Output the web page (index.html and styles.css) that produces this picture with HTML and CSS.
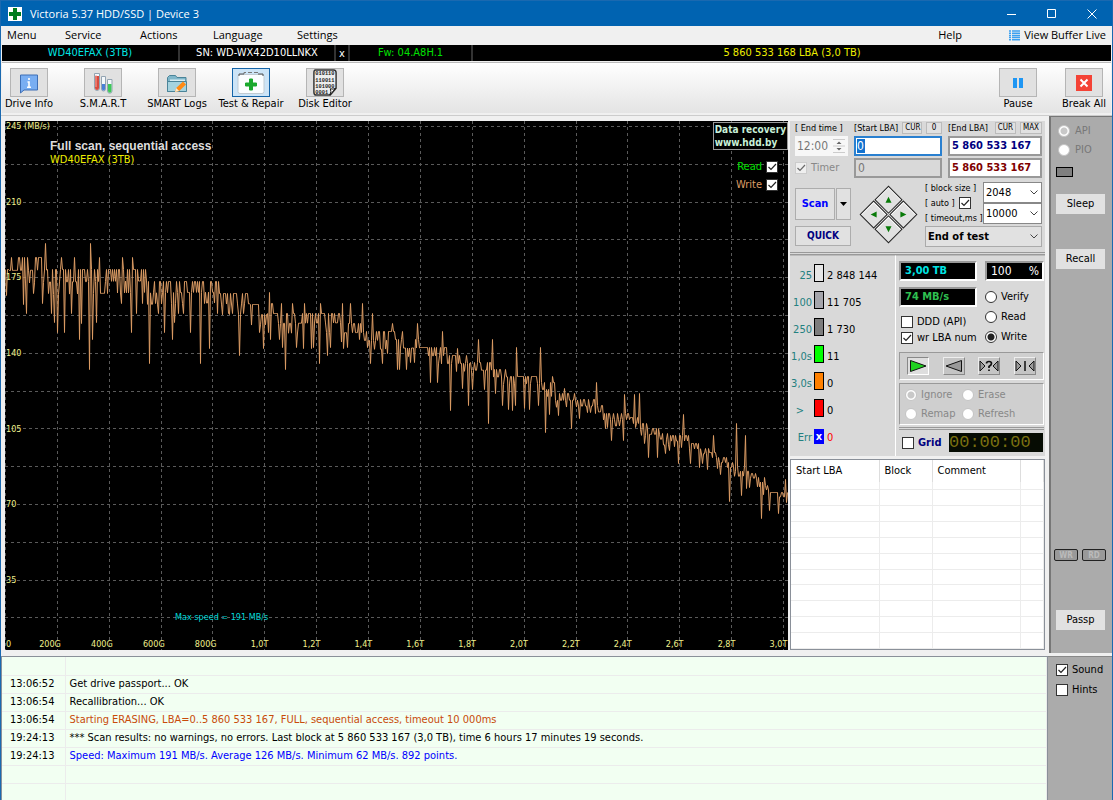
FILE: index.html
```
<!DOCTYPE html>
<html lang="en">
<head>
  <meta charset="utf-8">
  <meta name="viewport" content="width=device-width, initial-scale=1.0">
  <title>Victoria 5.37 HDD/SSD | Device 3</title>
  <link rel="stylesheet" href="styles.css">
</head>
<body>
  <header class="titlebar">
    <svg class="app-icon" viewBox="0 0 14 14"><rect width="14" height="14" fill="#fff"/><path d="M5 1h4v4h4v4H9v4H5V9H1V5h4z" fill="#007d1e"/></svg>
    <h1>Victoria 5.37 HDD/SSD | Device 3</h1>
    <div class="window-buttons">
      <button aria-label="Minimize"><svg viewBox="0 0 10 10"><path d="M0 5.5h9"/></svg></button>
      <button aria-label="Maximize"><svg viewBox="0 0 10 10"><path d="M.5.5h8v8h-8z"/></svg></button>
      <button aria-label="Close"><svg viewBox="0 0 10 10"><path d="M.5.5l9 9M9.5.5l-9 9"/></svg></button>
    </div>
  </header>

  <nav class="menu">
    <a href="#">Menu</a>
    <a href="#">Service</a>
    <a href="#">Actions</a>
    <a href="#">Language</a>
    <a href="#">Settings</a>
    <a href="#" class="help">Help</a>
    <a href="#" class="buffer">
      <svg viewBox="0 0 11 11"><path d="M0 1h2M3 1h8M0 3.2h2M3 3.2h8M0 5.4h2M3 5.4h8M0 7.6h2M3 7.6h8M0 9.8h2M3 9.8h8" stroke="#3ba0f0" stroke-width="1.5"/></svg>
      View Buffer Live
    </a>
  </nav>

  <div class="drive-bar">
    <span class="model">WD40EFAX (3TB)</span>
    <span class="serial">SN: WD-WX42D10LLNKX</span>
    <button class="close-drive">x</button>
    <span class="firmware">Fw: 04.A8H.1</span>
    <span class="capacity">5 860 533 168 LBA (3,0 TB)</span>
  </div>

  <div class="toolbar">
    <button class="tool">
      <span class="tool-box"><svg viewBox="0 0 24 24"><path d="M3.500 4h17v15H7l-3.500 3z" fill="#79aef2" stroke="#3f6fb5"/><path d="M12 7v2M10.500 11H12v5M10 16.300h4" stroke="#fff" stroke-width="1.600" fill="none"/></svg></span>
      Drive Info
    </button>
    <button class="tool">
      <span class="tool-box"><svg viewBox="0 0 24 24"><g fill="#f4f8fb" stroke="#93a4b2"><path d="M3.500 2.500h5V17a2.500 2.500 0 0 1-5 0z"/><path d="M10.500 5.500h4V18a2 2 0 0 1-4 0z"/><path d="M16.500 8.500h4.500V20a2.200 2.200 0 0 1-4.500 0z"/></g><path d="M4 5h4v12a2 2 0 0 1-4 0z" fill="#d94a3e"/><path d="M11 13h3v5a1.500 1.500 0 0 1-3 0z" fill="#4a80d8"/><path d="M17 13h3.500v7a1.700 1.700 0 0 1-3.500 0z" fill="#3fc85a"/><path d="M5 4v12" stroke="#f5a79d"/></svg></span>
      S.M.A.R.T
    </button>
    <button class="tool">
      <span class="tool-box"><svg viewBox="0 0 24 24"><path d="M2.500 20.500v-14l2-2h6l1.500 2h9v14z" fill="#7fb6c9" stroke="#4b8499"/><path d="M5 8.500h15v3H5z" fill="#d7edf3"/><path d="M2.500 20.500V10.500h19v10z" fill="#a5d3df" stroke="#4b8499"/><path d="M10 21l1.200-4L18 10.500l3 3-6.800 6.500z" fill="#ff8a14"/><path d="M10 21l1.200-4 3 3z" fill="#ffe9c9"/></svg></span>
      SMART Logs
    </button>
    <button class="tool active">
      <span class="tool-box"><svg class="wide" viewBox="0 0 28 24"><path d="M7 3.500V1.500h14v2" fill="none" stroke="#777" stroke-dasharray="4 2"/><rect x="1" y="3.500" width="26" height="19" rx="2" fill="#fafdff" stroke="#c0cbd3"/><path d="M2 5V3h5M21 3h5v2" fill="none" stroke="#555"/><path d="M12.500 8h3v4h4v3h-4v4h-3v-4h-4v-3h4z" fill="#19a82e" stroke="#19a82e"/></svg></span>
      Test &amp; Repair
    </button>
    <button class="tool">
      <span class="tool-box"><svg class="disk" viewBox="0 0 26 28"><path d="M3 1h19q2.500 0 2.500 3v16l-6 7H4Q1.500 27 1.500 24V4Q1.500 1 3 1z" fill="#ededed" stroke="#333" stroke-width="1.500"/><g font-family="Liberation Mono, monospace" font-size="5.500" font-weight="bold" fill="#222"><text x="3" y="6.500">010110</text><text x="3" y="13">110011</text><text x="3" y="19.500">101000</text><text x="3" y="26">0001</text></g><path d="M24 20l-6 7q2-4 .5-6.500 3 1 5.500-.5z" fill="#fff" stroke="#111"/></svg></span>
      Disk Editor
    </button>
    <div class="toolbar-right">
      <button class="tool">
        <span class="tool-box"><svg class="small" viewBox="0 0 10 10"><path d="M0 0h4v10H0zM6 0h4v10H6z" fill="#1f96f3"/></svg></span>
        Pause
      </button>
      <button class="tool">
        <span class="tool-box"><svg class="stop" viewBox="0 0 16 16"><rect width="16" height="16" fill="#f44336"/><path d="M4.500 4.500l7 7M11.500 4.500l-7 7" stroke="#fff" stroke-width="2"/></svg></span>
        Break All
      </button>
    </div>
  </div>

  <main class="main">
    <section class="chart">
      <svg id="graph" viewBox="0 0 783 529" preserveAspectRatio="none">
        <g id="grid"></g>
        <polyline id="speed"></polyline>
      </svg>
      <ul class="y-axis">
        <li>245 (MB/s)</li><li>210</li><li>175</li><li>140</li><li>105</li><li>70</li><li>35</li>
      </ul>
      <ul class="x-axis">
        <li>200G</li><li>400G</li><li>600G</li><li>800G</li><li>1,0T</li><li>1,2T</li><li>1,4T</li><li>1,6T</li><li>1,8T</li><li>2,0T</li><li>2,2T</li><li>2,4T</li><li>2,6T</li><li>2,8T</li><li>3,0T</li>
      </ul>
      <span class="x-zero">0</span>
      <div class="chart-title">
        <strong>Full scan, sequential access</strong>
        <span>WD40EFAX (3TB)</span>
      </div>
      <div class="chart-side">
        <a href="#" class="recovery">Data recovery<br>www.hdd.by</a>
        <label class="read">Read <input type="checkbox" checked></label>
        <label class="write">Write <input type="checkbox" checked></label>
      </div>
      <span class="max-speed">Max speed = 191 MB/s</span>
    </section>

    <section class="panel">
      <div class="range">
        <div class="range-grid">
          <label class="caption" for="endTime">[ End time ]</label>
          <div class="caption-row">
            <label class="caption" for="startLba">[Start LBA]</label>
            <button class="mini">CUR</button>
            <button class="mini">0</button>
          </div>
          <div class="caption-row">
            <label class="caption" for="endLba">[End LBA]</label>
            <button class="mini">CUR</button>
            <button class="mini">MAX</button>
          </div>
          <div class="time">
            <input id="endTime" type="text" value="12:00" disabled>
            <svg viewBox="0 0 12 14"><path d="M0 .5h12M0 7h12M0 13.500h12" stroke="#ccc"/><path d="M3.500 5L6 2.500 8.500 5M3.500 9L6 11.500 8.500 9" fill="#666"/></svg>
          </div>
          <div class="field"><input id="startLba" type="text" value="0"></div>
          <input id="endLba" class="lba" type="text" value="5 860 533 167">
          <label class="timer"><input type="checkbox" checked disabled> Timer</label>
          <input class="lba off" type="text" value="0" aria-label="Current start" disabled>
          <input class="lba red" type="text" value="5 860 533 167" aria-label="Current end">
        </div>
        <div class="range-bottom">
          <div class="scan-buttons">
            <button class="scan">Scan</button>
            <button class="scan-more" aria-label="Scan options"><svg viewBox="0 0 7 4"><path d="M0 0h7L3.500 4z"/></svg></button>
            <button class="quick">QUICK</button>
          </div>
          <div class="diamond">
            <button aria-label="Up"><svg class="up" viewBox="0 0 8 8"><path d="M4 1l3 6H1z"/></svg></button>
            <button aria-label="Right"><svg class="right" viewBox="0 0 8 8"><path d="M4 1l3 6H1z"/></svg></button>
            <button aria-label="Left"><svg class="left" viewBox="0 0 8 8"><path d="M4 1l3 6H1z"/></svg></button>
            <button aria-label="Down"><svg class="down" viewBox="0 0 8 8"><path d="M4 1l3 6H1z"/></svg></button>
          </div>
          <div class="options">
            <div class="option-labels">
              <label class="caption" for="blockSize">[ block size ]</label>
              <label class="caption auto">[ auto ] <input type="checkbox" checked></label>
              <label class="caption" for="timeout">[ timeout,ms ]</label>
            </div>
            <div class="option-fields">
              <select id="blockSize"><option>2048</option></select>
              <select id="timeout"><option>10000</option></select>
            </div>
            <select class="end-action" aria-label="When finished"><option>End of test</option></select>
          </div>
        </div>
      </div>

      <div class="stats">
        <dl class="blocks">
          <dt>25</dt><dd class="b25"><i></i>2 848 144</dd>
          <dt>100</dt><dd class="b100"><i></i>11 705</dd>
          <dt>250</dt><dd class="b250"><i></i>1 730</dd>
          <dt>1,0s</dt><dd class="b1s"><i></i>11</dd>
          <dt>3,0s</dt><dd class="b3s"><i></i>0</dd>
          <dt class="more">&gt;</dt><dd class="bmore"><i></i>0</dd>
          <dt>Err</dt><dd class="berr"><i>x</i>0</dd>
        </dl>
        <div class="modes">
          <div class="mode-grid">
            <div class="mode-col">
              <output class="lcd cyan">3,00 TB</output>
              <output class="lcd green">74 MB/s</output>
              <label><input type="checkbox"> DDD (API)</label>
              <label><input type="checkbox" checked> wr LBA num</label>
            </div>
            <div class="mode-col right-col">
              <output class="lcd percent"><span>100</span><span>%</span></output>
              <label><input type="radio" name="mode"> Verify</label>
              <label><input type="radio" name="mode"> Read</label>
              <label><input type="radio" name="mode" checked> Write</label>
            </div>
          </div>
          <div class="direction">
            <button class="pressed" aria-label="Forward"><svg viewBox="0 0 20 14"><path d="M2.500 1.500v11L18 7z" fill="#1fd11f" stroke="#111"/></svg></button>
            <button aria-label="Backward"><svg viewBox="0 0 20 14"><path d="M17.500 1.500v11L2 7z" fill="#9a9a9a" stroke="#111"/></svg></button>
            <button aria-label="Random"><svg viewBox="0 0 20 14"><path d="M1 2v10l5-5zM19 2v10l-5-5z" fill="#9a9a9a" stroke="#111"/><path d="M7.500 4.500q0-2 2.500-2t2.500 2q0 1.500-2.500 3V9M10 10.500v1.500" fill="none" stroke="#111" stroke-width="1.700"/></svg></button>
            <button aria-label="Butterfly"><svg viewBox="0 0 20 14"><path d="M1 2v10l5-5zM19 2v10l-5-5z" fill="#9a9a9a" stroke="#111"/><path d="M10 2v10" stroke="#111" stroke-width="1.500"/></svg></button>
          </div>
          <fieldset class="repair" disabled>
            <label><input type="radio" name="repair" checked> Ignore</label>
            <label><input type="radio" name="repair"> Erase</label>
            <label><input type="radio" name="repair"> Remap</label>
            <label><input type="radio" name="repair"> Refresh</label>
          </fieldset>
          <div class="grid-row">
            <label><input type="checkbox"> Grid</label>
            <output class="clock">00:00:00</output>
          </div>
        </div>
      </div>

      <div class="defects">
        <table>
          <thead>
            <tr><th class="c-start">Start LBA</th><th class="c-block">Block</th><th class="c-comment">Comment</th><th></th></tr>
          </thead>
          <tbody>
            <tr><td></td><td></td><td></td><td></td></tr>
            <tr><td></td><td></td><td></td><td></td></tr>
            <tr><td></td><td></td><td></td><td></td></tr>
            <tr><td></td><td></td><td></td><td></td></tr>
            <tr><td></td><td></td><td></td><td></td></tr>
            <tr><td></td><td></td><td></td><td></td></tr>
            <tr><td></td><td></td><td></td><td></td></tr>
            <tr><td></td><td></td><td></td><td></td></tr>
            <tr><td></td><td></td><td></td><td></td></tr>
            <tr><td></td><td></td><td></td><td></td></tr>
            <tr><td></td><td></td><td></td><td></td></tr>
          </tbody>
        </table>
      </div>
    </section>

    <aside class="side">
      <label class="dim"><input type="radio" name="access" checked disabled> API</label>
      <label class="dim"><input type="radio" name="access" disabled> PIO</label>
      <span class="led"></span>
      <button class="side-btn">Sleep</button>
      <button class="side-btn recall">Recall</button>
      <div class="indicators"><span>WR</span><span>RD</span></div>
      <button class="side-btn">Passp</button>
    </aside>
  </main>

  <footer class="bottom">
    <div class="log">
      <table>
        <tr><td></td><td></td></tr>
        <tr><td>13:06:52</td><td>Get drive passport... OK</td></tr>
        <tr><td>13:06:54</td><td>Recallibration... OK</td></tr>
        <tr><td>13:06:54</td><td class="warn">Starting ERASING, LBA=0..5 860 533 167, FULL, sequential access, timeout 10 000ms</td></tr>
        <tr><td>19:24:13</td><td>*** Scan results: no warnings, no errors. Last block at 5 860 533 167 (3,0 TB), time 6 hours 17 minutes 19 seconds.</td></tr>
        <tr><td>19:24:13</td><td class="info">Speed: Maximum 191 MB/s. Average 126 MB/s. Minimum 62 MB/s. 892 points.</td></tr>
        <tr><td></td><td></td></tr>
        <tr><td></td><td></td></tr>
      </table>
    </div>
    <div class="switches">
      <label><input type="checkbox" checked> Sound</label>
      <label><input type="checkbox"> Hints</label>
    </div>
  </footer>

  <script src="graph.js"></script>
</body>
</html>
```
FILE: styles.css
```
* {
  box-sizing: border-box;
}
body {
  margin: 0;
  min-height: 100vh;
  display: flex;
  flex-direction: column;
  border: 1px solid #1a69b0;
  background-color: #f0f0f0;
  color: #000;
  font-family: "DejaVu Sans Condensed", "DejaVu Sans", sans-serif;
  font-size: 11px;
  line-height: 14px;
}
button, input, select {
  font: inherit;
  color: inherit;
  margin: 0;
  padding: 0;
}
button {
  border: 1px solid #adadad;
  background-color: #e1e1e1;
}
a {
  color: inherit;
  text-decoration: none;
}
label {
  display: flex;
  align-items: center;
  gap: 4px;
  white-space: nowrap;
}
ul, dl, dd, fieldset {
  margin: 0;
  padding: 0;
  border: 0;
  list-style: none;
}
svg {
  display: block;
}
table {
  border-collapse: collapse;
}

input[type="checkbox"], input[type="radio"] {
  appearance: none;
  flex: none;
  width: 12px;
  height: 12px;
  border: 1px solid #333;
  background: #fff center / 10px 10px no-repeat;
}
input[type="radio"] {
  border-radius: 50%;
}
input[type="checkbox"]:checked {
  background-image: url("data:image/svg+xml,%3Csvg xmlns='http://www.w3.org/2000/svg' viewBox='0 0 10 10'%3E%3Cpath d='M1.500 5l2.500 2.500 5-5.500' fill='none' stroke='%23222' stroke-width='1.200'/%3E%3C/svg%3E");
}
input[type="radio"]:checked {
  background-image: radial-gradient(circle, #222 3px, transparent 4px);
}
input[type="checkbox"]:disabled, input[type="radio"]:disabled {
  border-color: #c4c4c4;
}
input[type="checkbox"]:disabled {
  opacity: 0.6;
}
input[type="radio"]:disabled:checked {
  background-image: radial-gradient(circle, #c8c8c8 3px, transparent 4px);
}

/* title and menu */
.titlebar {
  display: flex;
  align-items: center;
  height: 25px;
  padding-left: 7px;
  background-color: #0063b1;
  color: #fff;
}
.app-icon {
  width: 14px;
  height: 14px;
}
.titlebar h1 {
  margin: 0 auto 0 8px;
  font: 11px "Open Sans", sans-serif;
}
.window-buttons {
  display: flex;
}
.window-buttons button {
  width: 40px;
  height: 25px;
  display: grid;
  place-items: center;
  border: 0;
  background: none;
}
.window-buttons svg {
  width: 10px;
  height: 10px;
  fill: none;
  stroke: #fff;
}
.menu {
  display: grid;
  grid-template-columns: 58px 75px 73px 84px 1fr 71px auto;
  align-items: center;
  height: 18px;
  padding: 0 6px;
  font-family: "Open Sans", sans-serif;
}
.buffer {
  display: flex;
  align-items: center;
  gap: 4px;
}
.buffer svg {
  width: 11px;
  height: 11px;
}

.drive-bar {
  display: grid;
  grid-template-columns: 178px 156px 14px 123px 1fr;
  height: 16px;
  margin: 1px 1px 0;
  background-color: #000;
  text-align: center;
  line-height: 15px;
}
.drive-bar > * {
  border-right: 2px solid #333;
}
.model {
  color: #00e5e5;
}
.serial, .drive-bar .close-drive {
  color: #fff;
}
.close-drive {
  border-width: 0 2px 0 0;
  background: none;
}
.firmware {
  color: #00e000;
}
.drive-bar .capacity {
  border: 0;
  color: #ee0;
}

.toolbar {
  display: flex;
  gap: 20px;
  margin: 1px 1px 2px;
  padding-top: 5px;
  height: 51px;
  border-top: 1px solid #bbb;
  background: linear-gradient(#fff, #e4e4e4);
}
.toolbar-right {
  display: flex;
  gap: 12px;
  margin-left: auto;
}
.tool {
  display: flex;
  flex-direction: column;
  align-items: center;
  width: 54px;
  border: 0;
  background: none;
  white-space: nowrap;
}
.tool-box {
  display: grid;
  place-items: center;
  width: 38px;
  height: 29px;
  border: 1px solid #b5b5b5;
  background-color: #e1e1e1;
}
.tool svg {
  width: 24px;
  height: 24px;
}
.tool svg.wide {
  width: 28px;
}
.tool svg.disk {
  width: 26px;
  height: 27px;
}
.tool svg.small {
  width: 10px;
  height: 10px;
}
.tool svg.stop {
  width: 16px;
  height: 16px;
}
.active .tool-box {
  border-color: #1464a8;
  background-color: #cce4f7;
}

/* main area */
.main {
  flex: 1;
  display: flex;
  gap: 2px;
  border-top: 1px solid #ccc;
}
.chart {
  position: relative;
  flex: 1;
  min-height: 529px;
  margin: 5px 0 3px 4px;
  background-color: #000;
  color: #f0f08c;
  font-size: 9px;
  line-height: 12px;
}
#graph {
  position: absolute;
  width: 100%;
  height: 100%;
}
#grid line {
  stroke: #5a5a5a;
  stroke-dasharray: 3 3;
}
#speed {
  fill: none;
  stroke: #dc9c64;
  stroke-width: 1;
}
.y-axis {
  position: absolute;
  top: 0;
  left: 1px;
  height: 100%;
  line-height: 10px;
}
.y-axis li {
  height: 14.3%;
}
.x-axis {
  position: absolute;
  bottom: 0;
  left: 4px;
  width: 99.4%;
  display: flex;
}
.x-axis li {
  flex: 1;
  text-align: right;
}
.x-zero {
  position: absolute;
  bottom: 0;
  left: 1px;
}
.chart-title {
  position: absolute;
  top: 18px;
  left: 45px;
  display: grid;
  font-size: 11px;
  line-height: 14px;
  color: #ee0;
}
.chart-title strong {
  font: bold 12px/14px "Liberation Sans", sans-serif;
  color: #ddd;
}
.chart-side {
  position: absolute;
  top: 1px;
  right: 0;
  display: flex;
  flex-direction: column;
  align-items: flex-end;
  gap: 4px;
  font-size: 11px;
  line-height: 14px;
}
.chart-side label {
  margin-right: 10px;
}
.recovery {
  margin-bottom: 6px;
  padding: 0 1px;
  border: 1px solid #999;
  background-color: #000;
  color: #c8f0d8;
  font-size: 10px;
  font-weight: bold;
  line-height: 13px;
}
.read {
  color: #00e000;
}
.write {
  color: #dc9c64;
}
.max-speed {
  position: absolute;
  left: 170px;
  bottom: 27px;
  color: #00d8d8;
}

/* control panel */
.panel {
  width: 255px;
  display: flex;
  flex-direction: column;
  margin: 5px 2px 3px 0;
}
.range {
  padding: 1px 1px 5px 5px;
  background-color: #d9d9d9;
  border-bottom: 3px double #999;
}
.range-grid {
  display: grid;
  grid-template-columns: 53px 88px 94px;
  grid-template-rows: 12px 20px 20px;
  gap: 2px 6px;
}
.caption {
  font-size: 9px;
  line-height: 12px;
}
.caption-row {
  display: flex;
  gap: 4px;
}
.caption-row label {
  margin-right: auto;
}
.mini {
  min-width: 16px;
  padding: 0 2px;
  border-color: #bbb;
  font-size: 8px;
  line-height: 10px;
}
.time {
  display: flex;
  align-items: center;
  padding: 0 2px;
  background-color: #f7f7f7;
  color: #777;
}
.time input {
  width: 36px;
  border: 0;
  background: none;
  font-size: 12px;
}
.time svg {
  width: 12px;
  height: 14px;
}
.field {
  display: flex;
  align-items: center;
  padding-left: 1px;
  background-color: #fff;
  border: 2px solid #2a80d0;
}
.field input {
  width: 8px;
  height: 14px;
  border: 0;
  background-color: #1272cf;
  color: #fff;
  font-size: 12px;
}
.lba {
  width: 100%;
  padding-left: 2px;
  border: 2px solid #999;
  background-color: #fff;
  color: #000080;
  font-weight: bold;
}
.lba.red {
  color: #800000;
}
.lba.off {
  background-color: #d9d9d9;
  color: #777;
  font-size: 12px;
  font-weight: normal;
}
.timer {
  color: #888;
}
.range-bottom {
  display: grid;
  grid-template-columns: 56px 62px 117px;
  gap: 6px;
  margin-top: 4px;
}
.scan-buttons {
  display: grid;
  grid-template-columns: 40px 15px;
  grid-template-rows: 32px 20px;
  gap: 6px 1px;
  padding-top: 6px;
}
.scan {
  color: #0000ff;
  font-weight: bold;
}
.scan-more {
  display: grid;
  place-items: center;
}
.scan-more svg {
  width: 7px;
  height: 4px;
}
.quick {
  grid-column: span 2;
  color: #000080;
  font-size: 10px;
  font-weight: bold;
}
.diamond {
  display: grid;
  grid-template-columns: 20px 20px;
  grid-template-rows: 20px 20px;
  gap: 1px;
  place-self: center;
  transform: rotate(45deg);
}
.diamond button {
  display: grid;
  place-items: center;
  border-color: #222;
  box-shadow: inset 1px 1px #fff;
}
.diamond svg {
  width: 8px;
  height: 8px;
  fill: #087a08;
}
.up {
  transform: rotate(-45deg);
}
.right {
  transform: rotate(45deg);
}
.left {
  transform: rotate(-135deg);
}
.down {
  transform: rotate(135deg);
}
.options {
  display: grid;
  grid-template-columns: 58px 59px;
  row-gap: 2px;
}
.option-labels {
  display: flex;
  flex-direction: column;
  justify-content: space-between;
}
.option-fields {
  display: grid;
}
select {
  appearance: none;
  width: 100%;
  height: 21px;
  padding-left: 2px;
  border: 1px solid #888;
  border-radius: 0;
  background: #fff url("data:image/svg+xml,%3Csvg xmlns='http://www.w3.org/2000/svg' viewBox='0 0 8 5'%3E%3Cpath d='M.5.5L4 4 7.500.5' fill='none' stroke='%23444'/%3E%3C/svg%3E") right 3px center / 8px 5px no-repeat;
}
.end-action {
  grid-column: span 2;
  border-color: #aaa;
  background-color: #e1e1e1;
  font-weight: bold;
}

.stats {
  display: flex;
  background-color: #d9d9d9;
}
.blocks {
  flex: 1;
  display: grid;
  grid-template-columns: 22px 1fr;
  grid-auto-rows: 27px;
  column-gap: 2px;
  align-items: center;
  padding: 6px 0 5px;
  border-top: 1px solid #bbb;
  border-right: 1px solid #fff;
}
.blocks dt {
  text-align: right;
  color: #238080;
  white-space: nowrap;
}
.blocks .more {
  padding-right: 8px;
}
.blocks dd {
  display: flex;
  align-items: center;
  gap: 3px;
}
.blocks i {
  width: 10px;
  height: 18px;
  margin-top: -6px;
  border: 1px solid #000;
  font-style: normal;
  text-align: center;
}
.b25 i {
  background-color: #e6e6e6;
}
.b100 i {
  background-color: #a5a5ab;
}
.b250 i {
  background-color: #7d7d7d;
}
.b1s i {
  background-color: #00ff00;
}
.b3s i {
  background-color: #ff8000;
}
.bmore i {
  background-color: #ff0000;
}
.blocks .berr {
  color: #ff0000;
}
.blocks .berr i {
  height: 15px;
  margin-top: -2px;
  border: 0;
  background-color: #0000ff;
  color: #fff;
  font-weight: bold;
  line-height: 15px;
}
.modes {
  width: 149px;
  padding: 5px 1px 3px 3px;
  border-top: 1px solid #bbb;
}
.mode-grid {
  display: grid;
  grid-template-columns: 77px 59px;
  justify-content: space-between;
}
.mode-col {
  display: grid;
  grid-template-rows: 20px 33px 16px 16px;
  align-content: start;
}
.green {
  margin-top: 6px;
}
.right-col {
  grid-template-rows: 26px 20px 20px 20px;
}
.mode-col:first-child label {
  padding-left: 2px;
}
.lcd {
  height: 20px;
  padding-left: 4px;
  border: 2px solid;
  border-color: #999 #fff #fff #999;
  background-color: #000;
  font-weight: bold;
  line-height: 16px;
}
.cyan {
  color: #00e5e5;
}
.green {
  color: #2fbf50;
}
.percent {
  display: flex;
  justify-content: space-between;
  padding-right: 3px;
  color: #fff;
  font-size: 12px;
  font-weight: normal;
}
.direction {
  display: flex;
  justify-content: space-between;
  margin-top: 5px;
  padding: 4px 7px;
  border: 1px solid;
  border-color: #999 #fff #fff #999;
  background-color: #cfcfcf;
}
.direction button {
  width: 22px;
  height: 18px;
  border-color: #eee #888 #888 #eee;
  background-color: #c4c4c4;
}
.direction .pressed {
  border-color: #888 #fff #fff #888;
  background-color: #dedede;
}
.direction svg {
  width: 20px;
  height: 14px;
}
.repair {
  display: grid;
  grid-template-columns: 57px 1fr;
  grid-auto-rows: 19px;
  margin-top: 3px;
  padding: 1px 5px;
  border: 1px solid;
  border-color: #999 #fff #fff #999;
  background-color: #cfcfcf;
  color: #888;
}
.grid-row {
  display: flex;
  justify-content: space-between;
  margin-top: 2px;
  padding: 3px 1px 0 3px;
  border-top: 3px double #999;
}
.grid-row label {
  color: #000080;
  font-weight: bold;
}
.clock {
  width: 94px;
  height: 19px;
  background-color: #060c03;
  color: #7a7010;
  font: 17px/19px "Liberation Mono", monospace;
}

.defects {
  flex: 1;
  margin-top: 3px;
  border: 1px solid #8a9099;
  background-color: #fff;
}
.defects table {
  width: 100%;
  height: 100%;
  table-layout: fixed;
}
.defects th {
  height: 22px;
  padding: 0 0 0 5px;
  border-right: 1px solid #ddd;
  font-weight: normal;
  text-align: left;
}
.defects td {
  padding: 0;
  border: 1px solid #ececec;
  border-left: 0;
  border-top: 0;
}
.c-start {
  width: 88px;
}
.c-block {
  width: 53px;
}
.c-comment {
  width: 88px;
}

.side {
  width: 63px;
  display: flex;
  flex-direction: column;
  align-items: flex-start;
  padding: 4px 5px 23px;
  border: solid #777;
  border-width: 1px 0 0 2px;
  background-color: #ababab;
}
.side label {
  height: 19px;
  gap: 5px;
  padding-left: 2px;
}
.dim {
  color: #777;
}
.led {
  width: 17px;
  height: 10px;
  margin: 8px 0 17px;
  border: 1px solid #000;
  background-color: #808080;
}
.side-btn {
  width: 49px;
  height: 20px;
  border: 0;
}
.recall {
  margin-top: 35px;
}
.indicators {
  display: flex;
  gap: 4px;
  margin: auto 0 49px -2px;
}
.indicators span {
  width: 24px;
  height: 12px;
  border: 1px solid #222;
  border-radius: 2px;
  background-color: #999;
  color: #bbb;
  font-size: 8px;
  font-weight: bold;
  line-height: 11px;
  text-align: center;
}

/* log */
.bottom {
  display: flex;
  margin-top: 3px;
}
.log {
  flex: 1;
  border: 1px solid #8a9099;
  background-color: #f2fff2;
}
.log table {
  width: 100%;
}
.log td {
  height: 18px;
  padding: 0 4px;
  border: 1px solid #ececec;
  border-width: 0 1px 1px 0;
}
.log tr:last-child td {
  border-bottom: 0;
}
.log td:first-child {
  width: 63px;
  padding-left: 8px;
}
.warn {
  color: #c84b0a;
}
.info {
  color: #0000ff;
}
.switches {
  width: 64px;
  padding: 3px 8px;
  background-color: #ababab;
  border-top: 1px solid #888;
}
.switches label {
  height: 20px;
}
```
FILE: graph.js
```
// upper edge of the speed line: [x from, y]
const levels = [
  [0, 148], [4, 136], [42, 148], [142, 160], [213, 172], [245, 183], [262, 182],
  [280, 192], [336, 202], [359, 210], [390, 218], [415, 226], [442, 234],
  [465, 241], [488, 248], [503, 255], [535, 261], [550, 272], [573, 278],
  [592, 284], [598, 292], [625, 296], [635, 302], [642, 307], [655, 312],
  [665, 314], [684, 322], [698, 327], [704, 331], [712, 336], [722, 341],
  [728, 345], [745, 352], [752, 356], [758, 364], [764, 371]
];

// single peaks and drops: x, y
const spikes = new Map([
  [18, 183], [21, 192], [28, 172], [37, 182], [40, 122], [43, 172], [46, 192], [49, 201],
  [52, 211], [56, 136], [59, 211], [66, 192], [69, 136], [74, 218], [76, 202], [84, 248],
  [85, 122], [87, 218], [91, 201], [94, 136], [102, 172], [116, 182], [117, 136], [126, 211],
  [127, 136], [131, 192], [137, 182], [144, 242], [150, 182], [153, 192], [159, 211], [167, 218],
  [169, 201], [173, 192], [178, 192], [185, 211], [195, 242], [199, 182], [204, 227], [206, 160],
  [212, 192], [213, 160], [223, 192], [227, 192], [234, 234], [238, 192], [254, 211], [258, 227],
  [263, 211], [264, 171], [265, 218], [274, 218], [277, 226], [280, 248], [287, 182], [291, 226],
  [298, 227], [299, 182], [306, 227], [308, 226], [314, 242], [315, 182], [322, 234], [325, 226],
  [337, 182], [338, 227], [342, 226], [345, 182], [354, 218], [357, 182], [362, 226], [365, 242],
  [367, 192], [377, 242], [382, 232], [387, 202], [392, 248], [394, 248], [397, 210], [401, 248],
  [405, 241], [409, 241], [412, 202], [425, 261], [432, 261], [437, 210], [445, 289], [452, 227],
  [457, 267], [463, 284], [467, 268], [473, 218], [479, 268], [483, 302], [487, 218], [490, 272],
  [497, 284], [503, 288], [507, 289], [510, 284], [511, 226], [519, 287], [524, 288], [533, 284],
  [535, 226], [540, 311], [544, 293], [547, 255], [553, 294], [559, 267], [566, 307], [574, 297],
  [590, 292], [591, 261], [600, 307], [602, 306], [606, 319], [618, 319], [619, 273], [629, 273],
  [630, 306], [634, 272], [639, 322], [643, 336], [652, 336], [660, 332], [664, 329], [673, 342],
  [676, 326], [678, 293], [685, 342], [694, 346], [697, 342], [702, 348], [708, 314], [712, 347],
  [715, 353], [724, 380], [731, 302], [736, 374], [740, 314], [741, 367], [744, 366], [756, 397],
  [759, 356], [764, 389], [773, 392], [780, 358], [781, 381]
]);

const svgNs = 'http://www.w3.org/2000/svg';
const grid = document.getElementById('grid');

function gridLine(x1, y1, x2, y2) {
  const line = document.createElementNS(svgNs, 'line');
  line.setAttribute('x1', x1);
  line.setAttribute('y1', y1);
  line.setAttribute('x2', x2);
  line.setAttribute('y2', y2);
  grid.appendChild(line);
}

for (let i = 0; i < 16; i++) {
  const x = Math.round(i * 51.87) + 0.5;
  gridLine(x, 0, x, 529);
}
for (let i = 0; i < 14; i++) {
  const y = Math.round(5 + i * 37.8) + 0.5;
  gridLine(0, y, 783, y);
}

let seed = 7;
function noise() {
  seed = (seed * 16807) % 2147483647;
  return seed / 2147483647;
}

const points = [];
let level = 0;
for (let x = 0; x < 783; x++) {
  while (level < levels.length - 1 && levels[level + 1][0] <= x) level++;
  const top = levels[level][1];
  let y = top;
  const step = 13 - x / 90;
  const r = noise();
  if (r > 0.88) y = top + step * 2;
  else if (r > 0.5) y = top + step;
  if (spikes.has(x)) y = spikes.get(x);
  points.push((x + 0.5) + ',' + (y + 0.5));
}
document.getElementById('speed').setAttribute('points', points.join(' '));
```
